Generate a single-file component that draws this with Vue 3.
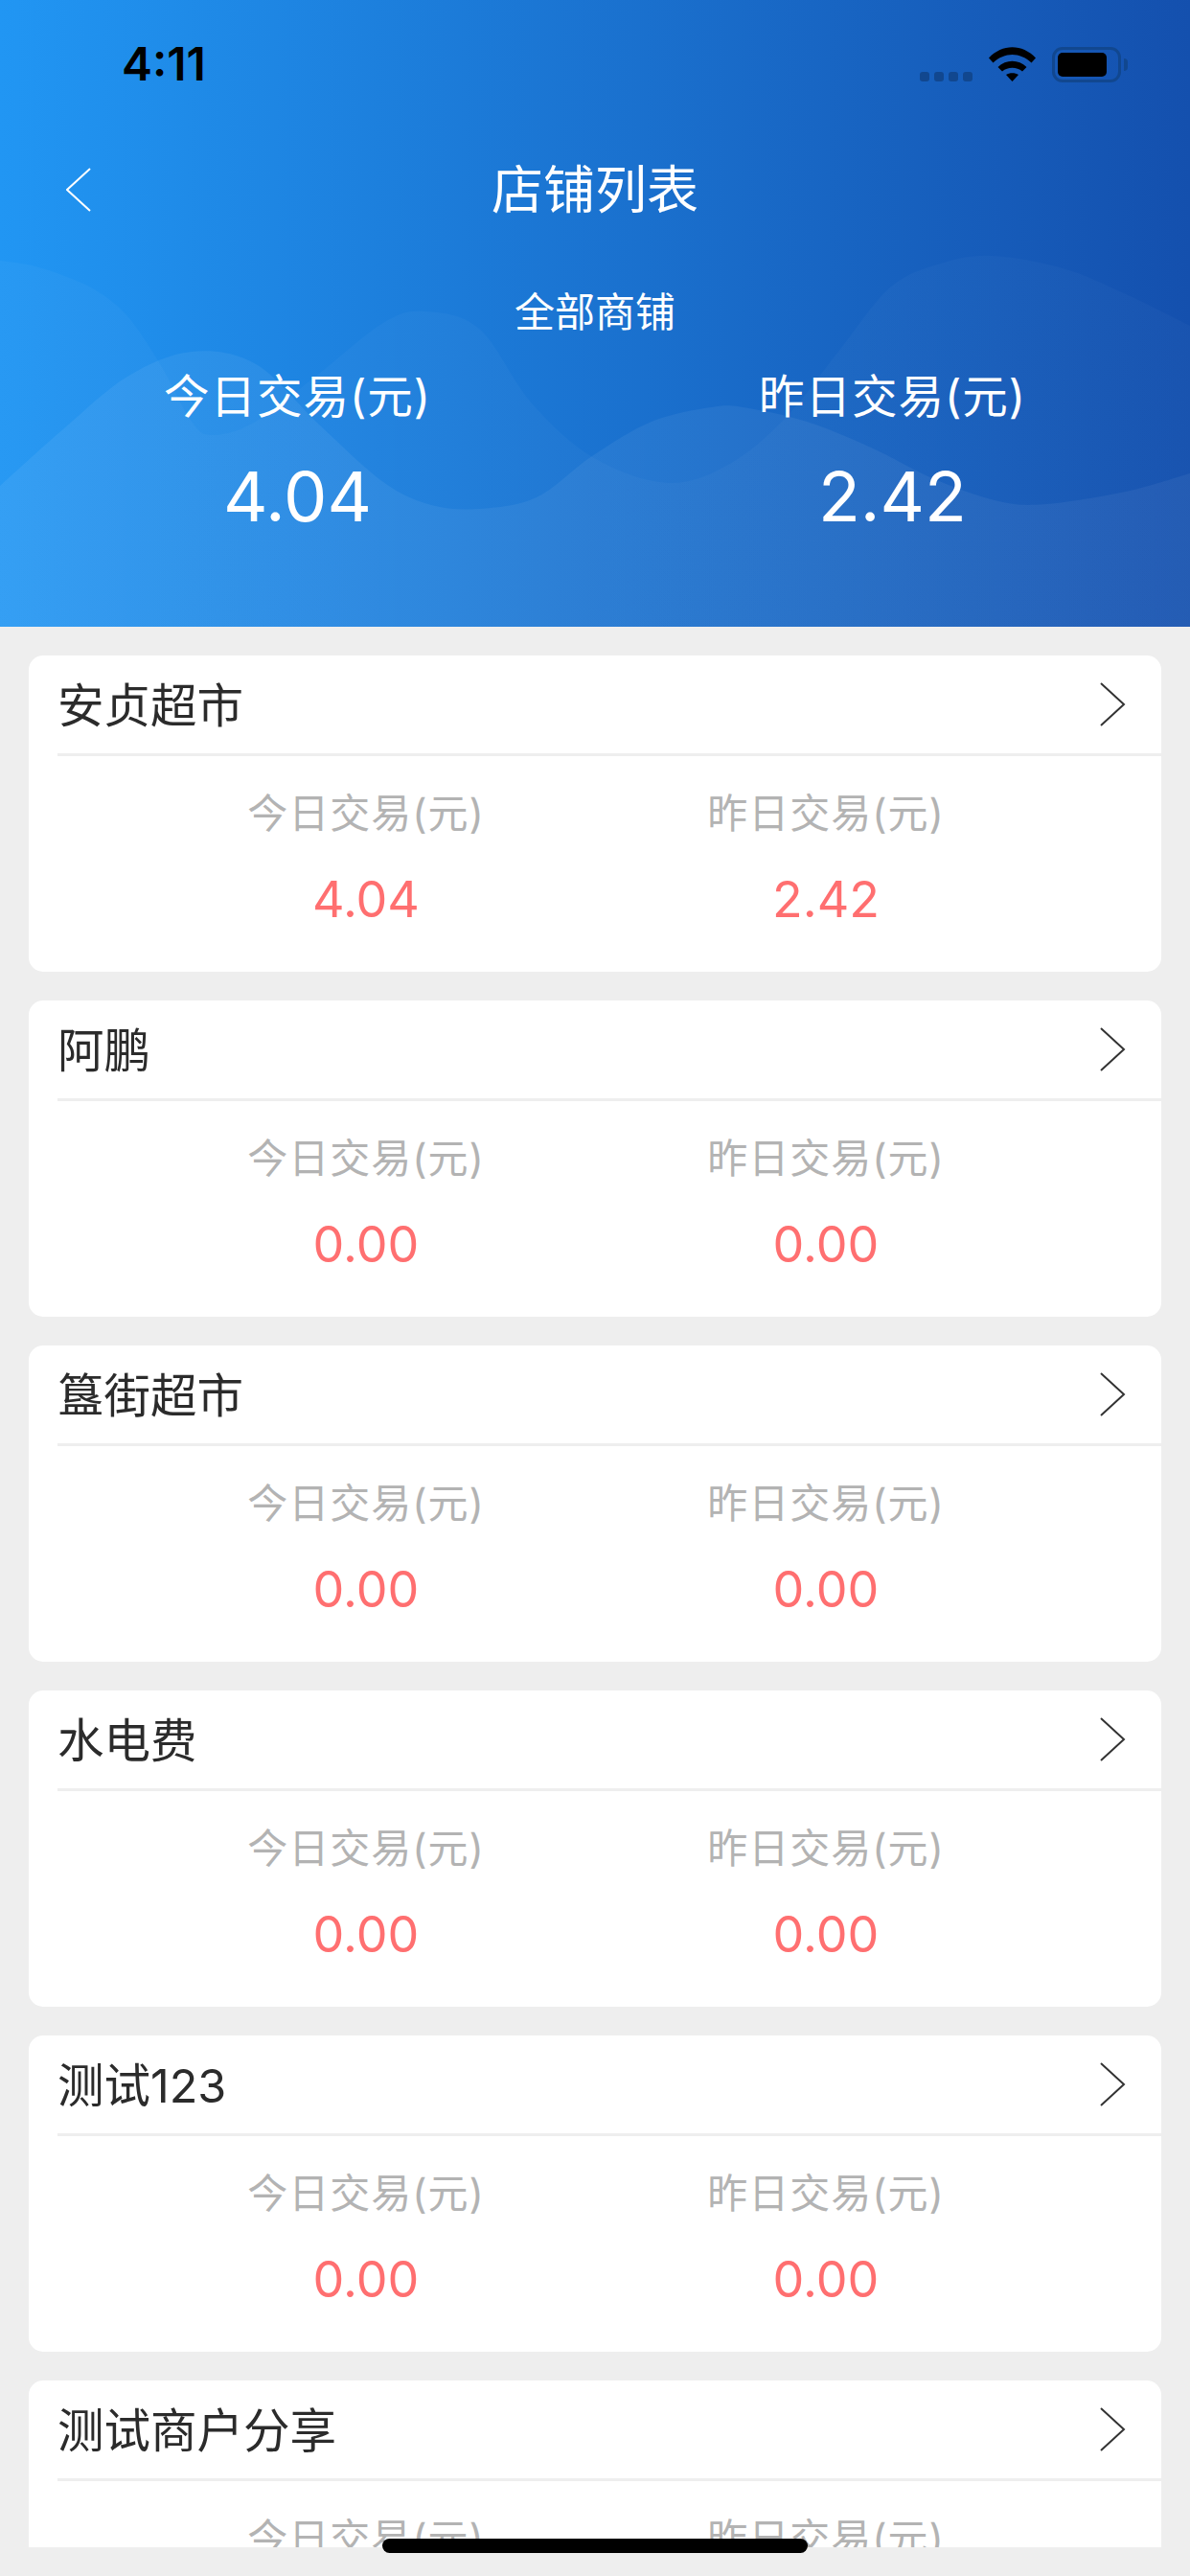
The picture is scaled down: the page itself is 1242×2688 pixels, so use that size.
<script setup>
const shops = [
  { name: '安贞超市', today: '4.04', yesterday: '2.42' },
  { name: '阿鹏', today: '0.00', yesterday: '0.00' },
  { name: '簋街超市', today: '0.00', yesterday: '0.00' },
  { name: '水电费', today: '0.00', yesterday: '0.00' },
  { name: '测试123', today: '0.00', yesterday: '0.00' },
  { name: '测试商户分享', today: '0.00', yesterday: '0.00' }
]

const backPoints = [
  [0, 272], [33, 277], [67, 288], [100, 303], [133, 330], [167, 380], [200, 440], [222, 454], [267, 440],
  [333, 390], [400, 337], [443, 325], [500, 343], [555, 421], [620, 478], [697, 504],
  [760, 485], [819, 437], [875, 367], [929, 300], [982, 275], [1035, 267], [1109, 280],
  [1175, 307], [1242, 340]
]
const frontPoints = [
  [0, 507], [67, 447], [133, 393], [200, 367], [267, 380], [333, 443], [400, 503],
  [450, 527], [500, 531], [560, 519], [618, 476], [680, 440], [742, 425], [775, 425],
  [842, 440], [909, 467], [975, 500], [1042, 523], [1092, 526], [1175, 513], [1242, 494]
]

function smooth(points) {
  let d = `M${points[0][0]} ${points[0][1]}`
  for (let i = 0; i < points.length - 1; i++) {
    const p0 = points[Math.max(i - 1, 0)]
    const p1 = points[i]
    const p2 = points[i + 1]
    const p3 = points[Math.min(i + 2, points.length - 1)]
    const c1x = p1[0] + (p2[0] - p0[0]) / 6
    const c1y = p1[1] + (p2[1] - p0[1]) / 6
    const c2x = p2[0] - (p3[0] - p1[0]) / 6
    const c2y = p2[1] - (p3[1] - p1[1]) / 6
    d += ` C${c1x} ${c1y} ${c2x} ${c2y} ${p2[0]} ${p2[1]}`
  }
  return d + ' V654 H0 Z'
}

const backWave = smooth(backPoints)
const frontWave = smooth(frontPoints)
</script>

<template>
  <div class="page">
    <header class="hero">
      <svg class="waves" viewBox="0 0 1242 654" aria-hidden="true">
        <defs>
          <linearGradient id="backFill" x1="0" y1="0" x2="1" y2="0">
            <stop offset="0" stop-color="#fff" stop-opacity="0.03" />
            <stop offset="1" stop-color="#fff" stop-opacity="0.022" />
          </linearGradient>
          <linearGradient id="frontFill" x1="0" y1="0" x2="1" y2="0">
            <stop offset="0" stop-color="#fff" stop-opacity="0.06" />
            <stop offset="1" stop-color="#fff" stop-opacity="0.05" />
          </linearGradient>
        </defs>
        <path fill="url(#backFill)" :d="backWave" />
        <path fill="url(#frontFill)" :d="frontWave" />
      </svg>
      <div class="status">
        <span class="time">4:11</span>
        <div class="status-icons">
          <span class="signal"><i></i><i></i><i></i><i></i></span>
          <svg class="wifi" viewBox="0 0 49 36" aria-hidden="true">
            <path d="M0 11.500 C14 -3.500 35 -3.500 49 11.500 L44.500 16.500 C32.500 5 16.500 5 4.500 16.500 Z" />
            <path d="M9.500 21 C18 12.500 31 12.500 39.500 21 L35 25.500 C29 20.500 20 20.500 14 25.500 Z" />
            <path d="M18 29 C21.500 26.500 27.500 26.500 31 29 L24.500 36 Z" />
          </svg>
          <span class="battery"><i></i></span>
        </div>
      </div>
      <div class="nav">
        <svg class="back" viewBox="0 0 26 46" aria-hidden="true"><path d="M25 1 L1 23 L25 45" /></svg>
        <h1>店铺列表</h1>
      </div>
      <div class="scope">全部商铺</div>
      <div class="totals">
        <div class="total">
          <span>今日交易(元)</span>
          <strong>4.04</strong>
        </div>
        <div class="total">
          <span>昨日交易(元)</span>
          <strong>2.42</strong>
        </div>
      </div>
    </header>

    <main class="list">
      <section v-for="shop in shops" :key="shop.name" class="card">
        <div class="card-head">
          <span class="name">{{ shop.name }}</span>
          <svg class="arrow" viewBox="0 0 27 46" aria-hidden="true"><path d="M1 1 L25 23 L1 45" /></svg>
        </div>
        <div class="stats">
          <div class="stat">
            <span>今日交易(元)</span>
            <b>{{ shop.today }}</b>
          </div>
          <div class="stat">
            <span>昨日交易(元)</span>
            <b>{{ shop.yesterday }}</b>
          </div>
        </div>
      </section>
    </main>
    <div class="home-bar"></div>
  </div>
</template>

<style>
html, body { margin: 0; background: #eee; }
</style>

<style scoped>
.page {
  position: relative;
  width: 1242px;
  height: 2688px;
  overflow: hidden;
  background: #eee;
  font-family: Inter, "Noto Sans CJK SC", sans-serif;
}
.hero {
  position: relative;
  height: 654px;
  background: linear-gradient(90deg, #2196f3 0%, #1450ae 100%);
  color: #fff;
  overflow: hidden;
}
.waves { position: absolute; inset: 0; width: 100%; height: 100%; }
.status {
  position: relative;
  height: 136px;
  box-sizing: border-box;
  padding: 43px 72px 0 127px;
  display: flex;
  justify-content: space-between;
}
.time {
  font: 600 48px/48px Inter, sans-serif;
  color: #000;
}
.status-icons { display: flex; align-items: flex-start; }
.signal { display: flex; gap: 5px; margin: 32px 17px 0 0; }
.signal i { width: 10px; height: 10px; border-radius: 3px; background: #11478f; }
.wifi { width: 49px; height: 36px; margin: 6px 17px 0 0; fill: #000; }
.battery {
  position: relative;
  width: 72px;
  height: 37px;
  margin-top: 6px;
  box-sizing: border-box;
  border: 3px solid #11478f;
  border-radius: 11px;
  padding: 3px;
}
.battery::after {
  content: "";
  position: absolute;
  right: -10px;
  top: 9px;
  width: 4px;
  height: 13px;
  border-radius: 0 6px 6px 0;
  background: #11478f;
}
.battery i { display: block; width: 51px; height: 25px; border-radius: 5px; background: #000; }
.nav {
  position: relative;
  height: 122px;
  display: flex;
  align-items: center;
  justify-content: center;
}
.nav h1 { margin: 3px 0 0; font-size: 54px; font-weight: 400; line-height: 70px; }
.back {
  position: absolute;
  left: 69px;
  top: 39px;
  width: 26px;
  height: 46px;
  fill: none;
  stroke: #fff;
  stroke-width: 2;
}
.scope {
  position: relative;
  margin-top: 43px;
  text-align: center;
  font-size: 42px;
  line-height: 50px;
}
.totals {
  position: relative;
  margin-top: 33px;
  display: grid;
  grid-template-columns: 1fr 1fr;
}
.total { display: flex; flex-direction: column; align-items: center; }
.total span { font-size: 47.500px; line-height: 60px; letter-spacing: 1px; }
.total strong { margin-top: 32px; font-size: 72px; font-weight: 400; line-height: 84px; }
.list {
  height: 2004px;
  box-sizing: border-box;
  padding: 30px 30px 0;
  display: flex;
  flex-direction: column;
  gap: 30px;
  overflow: hidden;
}
.card {
  flex: none;
  height: 330px;
  background: #fff;
  border-radius: 15px;
  overflow: hidden;
}
.card-head {
  height: 102px;
  margin-left: 30px;
  padding-right: 37px;
  display: flex;
  align-items: center;
  justify-content: space-between;
  border-bottom: 3px solid #eee;
}
.name { margin-top: 4px; font-size: 48.500px; line-height: 60px; color: #2b2b2b; }
.arrow { width: 27px; height: 46px; fill: none; stroke: #333; stroke-width: 2; }
.stats {
  display: grid;
  grid-template-columns: 480px 480px;
  padding: 33px 0 0 112px;
}
.stat { display: flex; flex-direction: column; align-items: center; }
.stat span { font-size: 42px; line-height: 54px; letter-spacing: 1px; color: #b3b3b3; }
.stat b { margin-top: 32px; font-size: 52px; font-weight: 400; line-height: 62px; color: #ff6f70; }
.home-bar {
  position: absolute;
  left: 399px;
  top: 2649px;
  width: 444px;
  height: 15px;
  border-radius: 8px;
  background: #000;
}
</style>
